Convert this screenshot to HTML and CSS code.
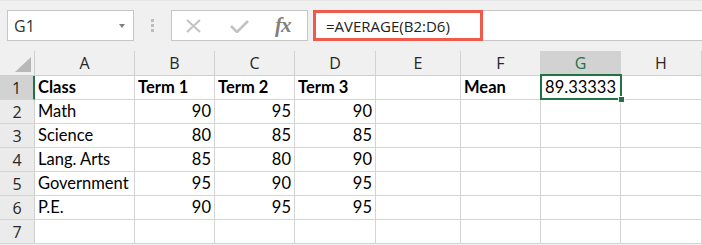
FILE: index.html
```html
<!DOCTYPE html>
<html>
<head>
<meta charset="utf-8">
<link rel="stylesheet" href="styles.css">
</head>
<body>
<div class="app">
  <div class="toolbar">
    <div class="namebox">
      <span class="name">G1</span>
      <svg class="caret" width="6" height="4" viewBox="0 0 6 4"><polygon points="0,0 6,0 3,4" fill="#7f7f7f"/></svg>
    </div>
    <div class="dots"><span></span><span></span><span></span></div>
    <div class="fnbox">
      <svg class="ico-x" width="15" height="14" viewBox="0 0 15 14"><path d="M1 1 L14 13 M14 1 L1 13" stroke="#c2c2c2" stroke-width="2" fill="none"/></svg>
      <svg class="ico-check" width="19" height="13" viewBox="0 0 19 13"><path d="M1 6 L7 12 L18 1" stroke="#c2c2c2" stroke-width="2.6" fill="none"/></svg>
      <span class="fx">fx</span>
    </div>
    <div class="formula">
      <div class="formula-hl">=AVERAGE(B2:D6)</div>
    </div>
  </div>
  <div class="sheet">
    <div class="corner"><svg width="16" height="15" viewBox="0 0 16 15"><polygon points="16,0 16,15 0,15" fill="#b8b8b8"/></svg></div>
    <div class="ch">A</div>
    <div class="ch">B</div>
    <div class="ch">C</div>
    <div class="ch">D</div>
    <div class="ch">E</div>
    <div class="ch">F</div>
    <div class="ch sel">G</div>
    <div class="ch">H</div>

    <div class="rh sel">1</div>
    <div class="c b">Class</div>
    <div class="c b">Term 1</div>
    <div class="c b">Term 2</div>
    <div class="c b">Term 3</div>
    <div class="c"></div>
    <div class="c b">Mean</div>
    <div class="c n active">89.33333<span class="handle"></span></div>
    <div class="c"></div>

    <div class="rh">2</div>
    <div class="c">Math</div>
    <div class="c n">90</div>
    <div class="c n">95</div>
    <div class="c n">90</div>
    <div class="c"></div><div class="c"></div><div class="c"></div><div class="c"></div>

    <div class="rh">3</div>
    <div class="c">Science</div>
    <div class="c n">80</div>
    <div class="c n">85</div>
    <div class="c n">85</div>
    <div class="c"></div><div class="c"></div><div class="c"></div><div class="c"></div>

    <div class="rh">4</div>
    <div class="c">Lang. Arts</div>
    <div class="c n">85</div>
    <div class="c n">80</div>
    <div class="c n">90</div>
    <div class="c"></div><div class="c"></div><div class="c"></div><div class="c"></div>

    <div class="rh">5</div>
    <div class="c">Government</div>
    <div class="c n">95</div>
    <div class="c n">90</div>
    <div class="c n">95</div>
    <div class="c"></div><div class="c"></div><div class="c"></div><div class="c"></div>

    <div class="rh">6</div>
    <div class="c">P.E.</div>
    <div class="c n">90</div>
    <div class="c n">95</div>
    <div class="c n">95</div>
    <div class="c"></div><div class="c"></div><div class="c"></div><div class="c"></div>

    <div class="rh">7</div>
    <div class="c"></div><div class="c"></div><div class="c"></div><div class="c"></div>
    <div class="c"></div><div class="c"></div><div class="c"></div><div class="c"></div>
  </div>
</div>
</body>
</html>
```

FILE: styles.css
```css
* { box-sizing: border-box; }
html, body { margin: 0; padding: 0; }
body {
  background: #f0f0f0;
  width: 702px;
  height: 245px;
  overflow: hidden;
  font-family: "Open Sans", "Noto Sans", sans-serif;
}
.app { display: flex; flex-direction: column; }

.toolbar {
  height: 51px;
  display: flex;
  align-items: flex-start;
  padding: 10px 0 0 7px;
  border-top: 1px solid #e4e4e4;
}
.namebox {
  width: 127px;
  height: 31px;
  margin-top: -1px;
  background: #fff;
  border: 1px solid #c6c6c6;
  display: flex;
  align-items: center;
  justify-content: space-between;
  padding: 0 8px 0 6px;
}
.name { font-size: 16px; color: #333; line-height: 1; }
.caret { display: block; }

.dots {
  width: 37px;
  height: 31px;
  margin-top: -1px;
  display: flex;
  flex-direction: column;
  align-items: center;
  justify-content: center;
  gap: 2px;
}
.dots span { width: 3px; height: 3px; background: #bdbdbd; display: block; }

.fnbox {
  width: 137px;
  height: 31px;
  margin-top: -1px;
  background: #fff;
  border: 1px solid #c6c6c6;
  display: flex;
  align-items: center;
  padding: 0 0 0 14px;
}
.ico-x { display: block; margin-top: 1px; }
.ico-check { display: block; margin-left: 29px; margin-top: 1px; }
.fx {
  margin-left: 26px;
  font-family: "Liberation Serif", "DejaVu Serif", serif;
  font-style: italic;
  font-weight: bold;
  font-size: 21px;
  color: #808080;
  line-height: 1;
  letter-spacing: -1px;
}

.formula {
  flex: 1;
  height: 31px;
  margin: -1px 0 0 5px;
  background: #fff;
  border: 1px solid #c6c6c6;
  border-right: none;
  display: flex;
}
.formula-hl {
  width: 170px;
  margin: -1px 0 -1px -1px;
  border: 3px solid #f05a4b;
  font-size: 15px;
  color: #222;
  display: flex;
  align-items: center;
  padding-left: 10px;
  white-space: nowrap;
}

.sheet {
  display: grid;
  grid-template-columns: 35px 100px 80px 80px 81px 85px 80px 80px 1fr;
  grid-template-rows: 25px repeat(7, 24px);
  background: #fff;
}
.corner, .ch, .rh {
  background: #f0f0f0;
  border-right: 1px solid #cfcfcf;
  border-bottom: 1px solid #cfcfcf;
  font-family: "Open Sans", "Noto Sans", sans-serif;
  font-size: 16px;
  color: #262626;
  display: flex;
  align-items: center;
  justify-content: center;
}
.corner {
  justify-content: flex-end;
  align-items: flex-end;
  padding: 0 3px 3px 0;
}
.corner svg { display: block; }
.ch { background: #f0f0f0; border-right-color: #d2d2d2; }
.ch.sel { background: #d2d2d2; color: #217346; }
.rh { border-bottom-color: #d4d4d4; background: #ebebeb; }
.rh.sel { background: #d2d2d2; border-right: 2px solid #217346; }

.c {
  border-right: 1px solid #d4d4d4;
  border-bottom: 1px solid #d4d4d4;
  font-family: "Lato", "Noto Sans", sans-serif;
  font-size: 16.5px;
  color: #000;
  line-height: 23px;
  padding: 0 3px 0 3px;
  white-space: nowrap;
  overflow: visible;
}
.c.b { font-weight: bold; }
.c.n { text-align: right; }
.c.active { position: relative; padding-right: 4px; }
.c.active::after {
  content: "";
  position: absolute;
  top: -2px;
  left: -1px;
  right: -2px;
  bottom: -1px;
  border: 2px solid #217346;
}
.handle {
  position: absolute;
  right: -5px;
  bottom: -4px;
  width: 7px;
  height: 7px;
  background: #217346;
  border: 1px solid #fff;
  z-index: 2;
}
```
